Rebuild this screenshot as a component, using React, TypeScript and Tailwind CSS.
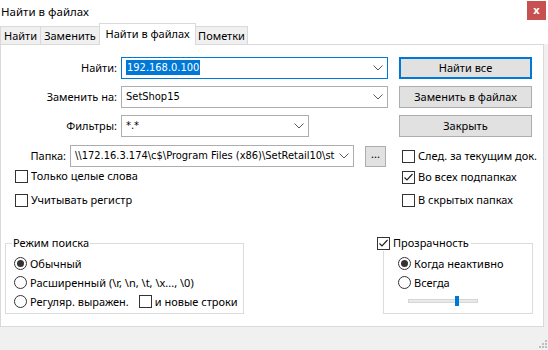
import React from "react";

const FONT = "font-['Noto_Sans','Roboto',sans-serif]";
const INPUT_FONT = "font-['DejaVu_Sans_Condensed','Liberation_Sans',sans-serif]";

const Chevron = () => (
  <svg width="10" height="6" viewBox="0 0 10 6" className="shrink-0">
    <path d="M0.5 0.5 L5 5 L9.5 0.5" fill="none" stroke="#5a5a5a" strokeWidth="1" />
  </svg>
);

const Combo = ({
  value,
  className,
  focused,
  selected,
}: {
  value: string;
  className: string;
  focused?: boolean;
  selected?: boolean;
}) => (
  <div
    className={`flex h-[22px] items-center border bg-white pr-[3px] ${
      focused ? "border-[#0078d7]" : "border-[#adadad]"
    } ${className}`}
  >
    <div className={`min-w-0 flex-1 overflow-hidden whitespace-nowrap pl-[4px] text-[11px] ${INPUT_FONT}`}>
      {selected ? (
        <span className="bg-[#0078d7] px-px py-[1px] text-white">{value}</span>
      ) : (
        value
      )}
    </div>
    <div className="flex w-[12px] justify-center">
      <Chevron />
    </div>
  </div>
);

const Button = ({ label, focused }: { label: string; focused?: boolean }) => (
  <div
    className={`ml-[11px] flex h-[22px] w-[133px] items-center justify-center bg-[#e1e1e1] ${
      focused ? "border-2 border-[#0078d7]" : "border border-[#adadad]"
    }`}
  >
    {label}
  </div>
);

const Check = ({ checked, label, className = "" }: { checked?: boolean; label: string; className?: string }) => (
  <div className={`flex h-[14px] items-center whitespace-nowrap ${className}`}>
    <div className="flex h-[13px] w-[13px] shrink-0 items-center justify-center border border-[#333] bg-white">
      {checked && (
        <svg width="11" height="11" viewBox="0 0 11 11">
          <path d="M1.5 5.5 L4 8 L9.5 2" fill="none" stroke="#222" strokeWidth="1.2" />
        </svg>
      )}
    </div>
    <span className="ml-[3px]">{label}</span>
  </div>
);

const Radio = ({ checked, label }: { checked?: boolean; label: string }) => (
  <div className="flex h-[19px] items-center whitespace-nowrap">
    <div className="flex h-[13px] w-[13px] shrink-0 items-center justify-center rounded-full border border-[#333] bg-white">
      {checked && <div className="h-[7px] w-[7px] rounded-full bg-[#333]" />}
    </div>
    <span className="ml-[3px]">{label}</span>
  </div>
);

const Tab = ({ label, active, w }: { label: string; active?: boolean; w: string }) => (
  <div
    className={`-ml-px flex items-center justify-center whitespace-nowrap border border-b-0 border-[#d9d9d9] first:ml-0 ${w} ${
      active ? "relative z-10 -mb-px h-[22px] bg-white pb-[2px]" : "h-[18px] bg-[#f0f0f0]"
    }`}
  >
    {label}
  </div>
);

export default function App() {
  return (
    <div className={`h-[350px] w-[548px] overflow-hidden bg-white text-[11px] leading-[16px] text-black ${FONT}`}>
      {/* title bar */}
      <div className="flex h-[22px] items-start justify-between pr-[2px]">
        <div className="mt-[4px] pl-[1px] text-[11.5px]">Найти в файлах</div>
        <div className="mt-[1px] flex h-[19px] w-[19px] items-center justify-center bg-[#c75050] pb-[2px] text-[11px] font-bold text-white">
          x
        </div>
      </div>

      {/* tabs */}
      <div className="flex h-[22px] items-end">
        <Tab label="Найти" w="w-[41px]" />
        <Tab label="Заменить" w="w-[60px]" />
        <Tab label="Найти в файлах" w="w-[97px]" active />
        <Tab label="Пометки" w="w-[53px]" />
      </div>

      <div className="flex h-[283px]">
        {/* panel */}
        <div className="flex h-[283px] w-[544px] flex-col border border-[#d9d9d9] bg-white">
          <div className="mt-[12px] flex items-center">
            <div className="w-[116px] text-right">Найти:</div>
            <Combo value="192.168.0.100" className="ml-[4px] w-[267px]" focused selected />
            <Button label="Найти все" focused />
          </div>
          <div className="mt-[7px] flex items-center">
            <div className="w-[116px] text-right">Заменить на:</div>
            <Combo value="SetShop15" className="ml-[4px] w-[267px]" />
            <Button label="Заменить в файлах" />
          </div>
          <div className="mt-[7px] flex items-center">
            <div className="w-[116px] text-right">Фильтры:</div>
            <Combo value="*.*" className="ml-[4px] w-[188px]" />
            <div className="w-[79px]" />
            <Button label="Закрыть" />
          </div>
          <div className="mt-[8px] flex items-center">
            <div className="w-[65px] text-right">Папка:</div>
            <Combo
              value="\\172.16.3.174\c$\Program Files (x86)\SetRetail10\st"
              className="ml-[4px] w-[284px]"
            />
            <div className="ml-[11px] flex h-[21px] w-[21px] items-center justify-center border border-[#adadad] bg-[#e1e1e1] pb-[4px]">
              ...
            </div>
            <Check label="След. за текущим док." className="ml-[16px]" />
          </div>

          <div className="flex">
            <div className="ml-[14px] flex w-[300px] flex-col">
              <Check label="Только целые слова" className="mt-[2px]" />
              <Check label="Учитывать регистр" className="mt-[10px]" />
            </div>
            <div className="ml-[87px] flex flex-col">
              <Check checked label="Во всех подпапках" className="mt-[3px]" />
              <Check label="В скрытых папках" className="mt-[9px]" />
            </div>
          </div>

          <div className="mt-[28px] flex">
            <fieldset className="ml-[4px] h-[79px] w-[239px] min-w-0 border border-[#dcdcdc] pl-[8px]">
              <legend className="ml-[-2px] px-px">Режим поиска</legend>
              <div className="pt-[3px]">
                <Radio checked label="Обычный" />
                <Radio label="Расширенный (\r, \n, \t, \x..., \0)" />
                <div className="flex items-center">
                  <Radio label="Регуляр. выражен." />
                  <Check label="и новые строки" className="ml-[10px]" />
                </div>
              </div>
            </fieldset>
            <fieldset className="ml-[139px] h-[79px] w-[150px] min-w-0 border border-[#dcdcdc] pl-[14px]">
              <legend className="-ml-[21px] pr-[2px]">
                <Check checked label="Прозрачность" className="h-[16px]" />
              </legend>
              <div className="pt-[3px]">
                <Radio checked label="Когда неактивно" />
                <Radio label="Всегда" />
                <div className="flex h-[17px] items-center pl-[10px]">
                  <div className="flex h-[4px] w-[70px] items-center border border-[#d6d6d6] bg-[#e7eaea] pl-[46px]">
                    <div className="h-[10px] w-[4px] shrink-0 bg-[#0078d7]" />
                  </div>
                </div>
              </div>
            </fieldset>
          </div>
        </div>
        <div className="flex-1 bg-[#f0f0f0]" />
      </div>

      {/* status strip */}
      <div className="flex h-[23px] items-end justify-end bg-[#f0f0f0] pb-[2px] pr-[1px]">
        <svg width="8" height="8" viewBox="0 0 8 8">
          <rect x="6" y="0" width="2" height="2" fill="#bdbdbd" />
          <rect x="3" y="3" width="2" height="2" fill="#bdbdbd" />
          <rect x="6" y="3" width="2" height="2" fill="#bdbdbd" />
          <rect x="0" y="6" width="2" height="2" fill="#bdbdbd" />
          <rect x="3" y="6" width="2" height="2" fill="#bdbdbd" />
          <rect x="6" y="6" width="2" height="2" fill="#bdbdbd" />
        </svg>
      </div>
    </div>
  );
}
